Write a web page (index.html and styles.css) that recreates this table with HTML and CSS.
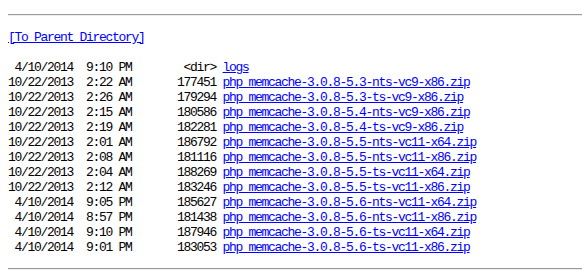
FILE: index.html
```html
<!DOCTYPE html>
<html>
<head>
<meta charset="utf-8">
<title>/</title>
<link rel="stylesheet" href="styles.css">
</head>
<body class="page">
<hr class="rule rule-top">
<pre class="listing"><a class="lnk" href="#">[To Parent Directory]</a>

 4/10/2014  9:10 PM        &lt;dir&gt; <a class="lnk" href="#">logs</a>
10/22/2013  2:22 AM       177451 <a class="lnk" href="#">php_memcache-3.0.8-5.3-nts-vc9-x86.zip</a>
10/22/2013  2:26 AM       179294 <a class="lnk" href="#">php_memcache-3.0.8-5.3-ts-vc9-x86.zip</a>
10/22/2013  2:15 AM       180586 <a class="lnk" href="#">php_memcache-3.0.8-5.4-nts-vc9-x86.zip</a>
10/22/2013  2:19 AM       182281 <a class="lnk" href="#">php_memcache-3.0.8-5.4-ts-vc9-x86.zip</a>
10/22/2013  2:01 AM       186792 <a class="lnk" href="#">php_memcache-3.0.8-5.5-nts-vc11-x64.zip</a>
10/22/2013  2:08 AM       181116 <a class="lnk" href="#">php_memcache-3.0.8-5.5-nts-vc11-x86.zip</a>
10/22/2013  2:04 AM       188269 <a class="lnk" href="#">php_memcache-3.0.8-5.5-ts-vc11-x64.zip</a>
10/22/2013  2:12 AM       183246 <a class="lnk" href="#">php_memcache-3.0.8-5.5-ts-vc11-x86.zip</a>
 4/10/2014  9:05 PM       185627 <a class="lnk" href="#">php_memcache-3.0.8-5.6-nts-vc11-x64.zip</a>
 4/10/2014  8:57 PM       181438 <a class="lnk" href="#">php_memcache-3.0.8-5.6-nts-vc11-x86.zip</a>
 4/10/2014  9:10 PM       187946 <a class="lnk" href="#">php_memcache-3.0.8-5.6-ts-vc11-x64.zip</a>
 4/10/2014  9:01 PM       183053 <a class="lnk" href="#">php_memcache-3.0.8-5.6-ts-vc11-x86.zip</a></pre>
<hr class="rule rule-bottom">
</body>
</html>
```

FILE: styles.css
```css
html, body {
  background: #ffffff;
}
.page {
  margin: 0 0 0 8px;
  overflow: hidden;
  height: 270px;
}
.rule {
  border: 0;
  height: 0;
  border-top: 1px solid #9a9a9a;
  border-bottom: 1px solid #eeeeee;
  margin: 0;
}
.rule-top {
  margin-top: 14px;
}
.rule-bottom {
  margin-top: 13px;
}
.listing {
  margin: 14px 0 0 0;
  font-family: "Liberation Mono", "DejaVu Sans Mono", monospace;
  font-size: 13px;
  letter-spacing: -1.3px;
  line-height: 15px;
  color: #000000;
}
.lnk {
  color: #0000ff;
  text-decoration: underline;
}
```
